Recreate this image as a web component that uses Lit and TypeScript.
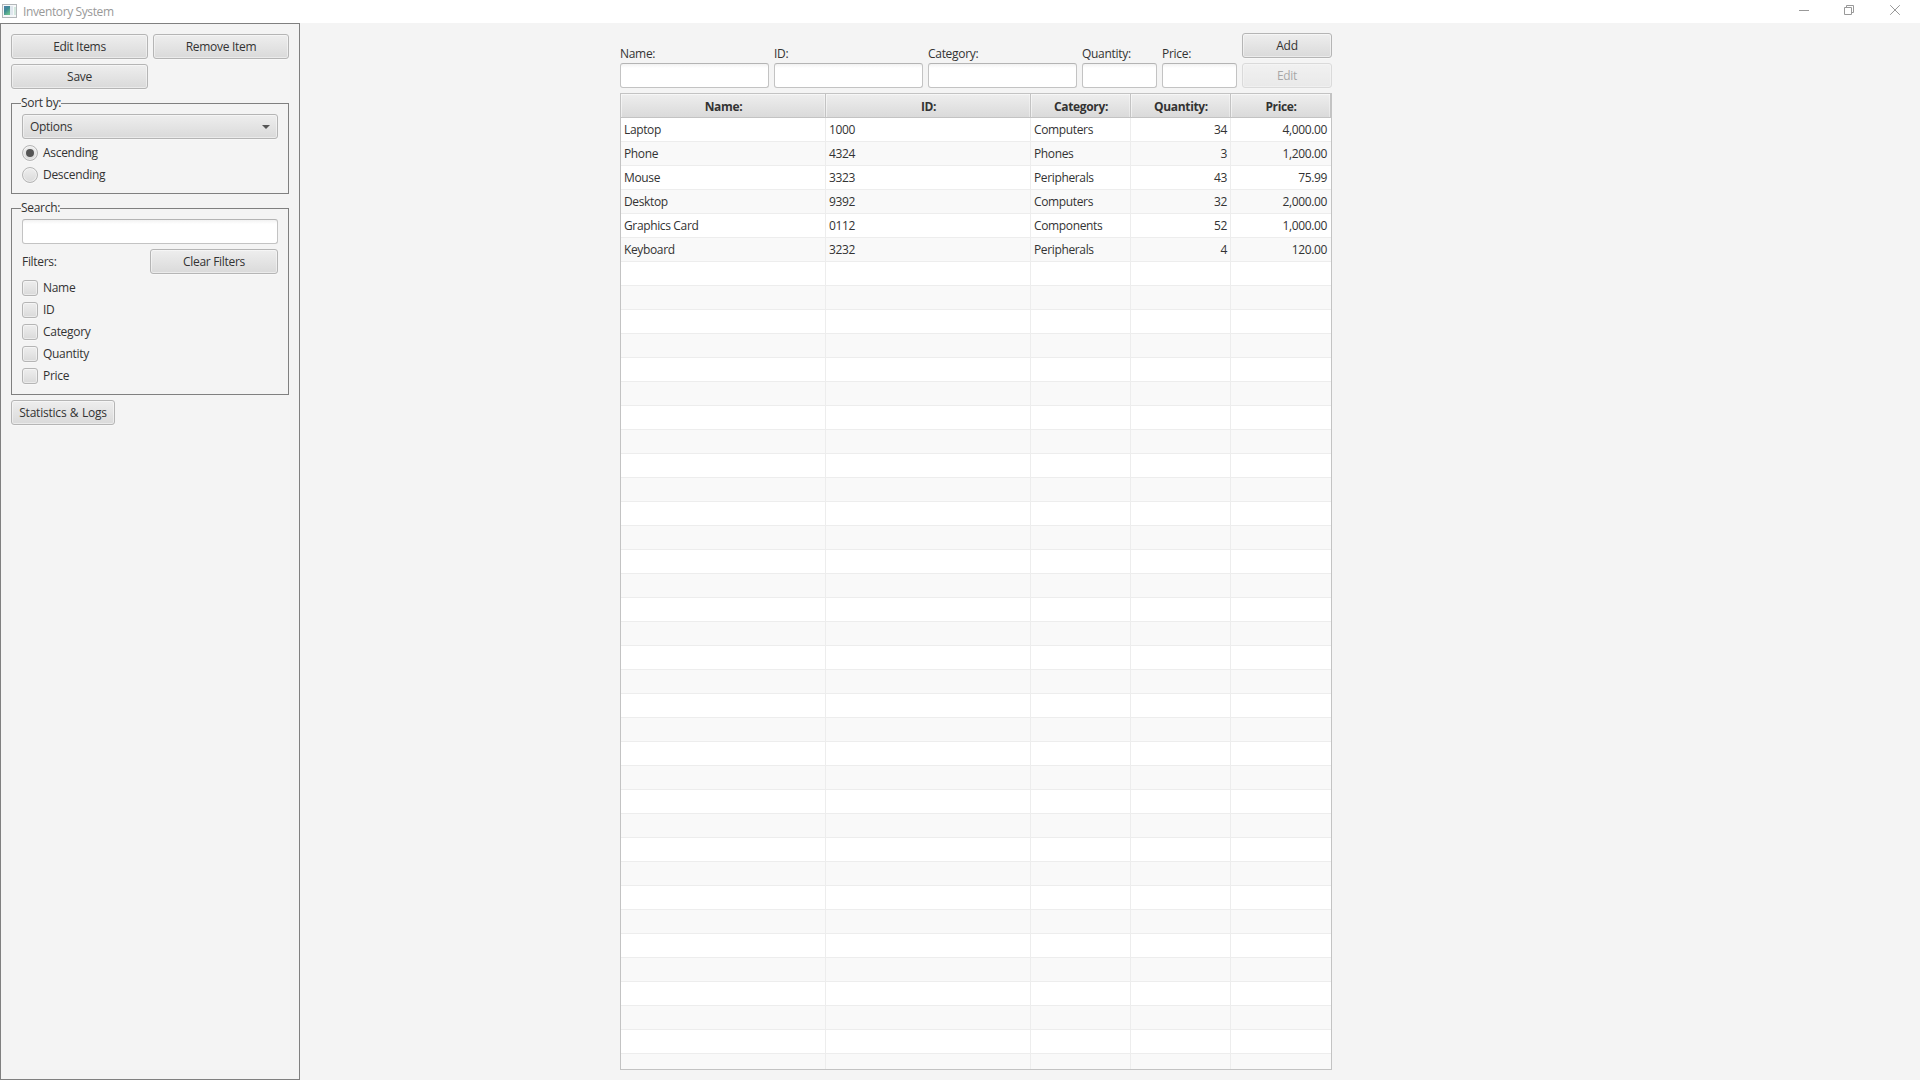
import { LitElement, html, css } from "lit";
import { customElement, property } from "lit/decorators.js";

interface Item {
  name: string;
  id: string;
  category: string;
  quantity: string;
  price: string;
}

const ITEMS: Item[] = [
  { name: "Laptop", id: "1000", category: "Computers", quantity: "34", price: "4,000.00" },
  { name: "Phone", id: "4324", category: "Phones", quantity: "3", price: "1,200.00" },
  { name: "Mouse", id: "3323", category: "Peripherals", quantity: "43", price: "75.99" },
  { name: "Desktop", id: "9392", category: "Computers", quantity: "32", price: "2,000.00" },
  { name: "Graphics Card", id: "0112", category: "Components", quantity: "52", price: "1,000.00" },
  { name: "Keyboard", id: "3232", category: "Peripherals", quantity: "4", price: "120.00" },
];

const ROW_COUNT = 40;
const FILTERS = ["Name", "ID", "Category", "Quantity", "Price"];
const COLUMNS = ["Name:", "ID:", "Category:", "Quantity:", "Price:"];

// Bevelled look shared by buttons, the combo box and check marks.
const bevel = css`
  .bevel {
    box-sizing: border-box;
    border: 1px solid #b5b5b5;
    border-radius: 3px;
    background: linear-gradient(#eeeeee, #dadada);
    box-shadow: inset 0 0 0 1px rgba(255, 255, 255, 0.45), 0 1px 0 #f8f8f8;
  }
  .field {
    box-sizing: border-box;
    height: 25px;
    border: 1px solid #c3c3c3;
    border-top-color: #b4b4b4;
    border-radius: 3px;
    background: linear-gradient(#f2f2f2, #ffffff 4px);
  }
`;

@customElement("title-bar")
export class TitleBar extends LitElement {
  static styles = css`
    :host {
      display: flex;
      align-items: flex-start;
      height: 23px;
      background: #fff;
    }
    .icon {
      margin: 4px 0 0 2px;
      display: block;
    }
    .title {
      flex: 1;
      margin-left: 6px;
      line-height: 23px;
      color: #999;
      letter-spacing: -0.38px;
    }
    .controls {
      display: block;
    }
  `;
  render() {
    return html`
      <svg class="icon" width="15" height="14" viewBox="0 0 15 14">
        <defs>
          <linearGradient id="g" x1="0" y1="0" x2="0.6" y2="1">
            <stop offset="0" stop-color="#4f7fae" />
            <stop offset="0.5" stop-color="#3f8b93" />
            <stop offset="1" stop-color="#6cc08f" />
          </linearGradient>
        </defs>
        <rect x="0.5" y="0.5" width="14" height="13" fill="#f6f8f9" stroke="#b3b7ba" />
        <rect x="2" y="2" width="6" height="9" fill="url(#g)" />
        <rect x="8" y="2" width="3" height="9" fill="#dfe7ee" />
        <rect x="12" y="3" width="2" height="8" fill="#d3e8df" />
      </svg>
      <span class="title">Inventory System</span>
      <svg class="controls" width="138" height="23" viewBox="0 0 138 23" fill="none" stroke="#999">
        <path d="M17 10.5H27" />
        <path d="M62.5 7.5H69.5V14.5H62.5ZM64.5 7V5.5H71.5V12.5H70" />
        <path d="M108.2 5.2L117.8 14.8M117.8 5.2L108.2 14.8" />
      </svg>
    `;
  }
}

@customElement("fx-button")
export class FxButton extends LitElement {
  @property() label = "";
  @property({ type: Boolean, reflect: true }) disabled = false;
  static styles = [
    bevel,
    css`
      :host {
        display: block;
        height: 25px;
      }
      :host([disabled]) {
        opacity: 0.4;
      }
      .bevel {
        height: 25px;
        padding: 0 7px;
        line-height: 23px;
        text-align: center;
        white-space: nowrap;
      }
    `,
  ];
  render() {
    return html`<div class="bevel">${this.label}</div>`;
  }
}

@customElement("side-panel")
export class SidePanel extends LitElement {
  static styles = [
    bevel,
    css`
      :host {
        box-sizing: border-box;
        width: 300px;
        border: 1px solid #808080;
        padding: 10px;
        display: flex;
        flex-direction: column;
      }
      .actions {
        display: grid;
        grid-template-columns: 137px 136px;
        gap: 5px;
      }
      .group {
        margin: 6px 0 0;
        padding: 2px 10px 10px;
        min-width: 0;
        border: 1px solid #808080;
      }
      .legend {
        margin-left: -1px;
        padding: 0;
        height: 17px;
        line-height: 16px;
      }
      .combo {
        display: flex;
        align-items: center;
        justify-content: space-between;
        height: 25px;
        padding: 0 7px;
        line-height: 23px;
      }
      .arrow {
        display: block;
      }
      .check {
        display: flex;
        align-items: center;
        gap: 5px;
        height: 16px;
        margin-top: 6px;
        line-height: 16px;
      }
      .mark {
        width: 16px;
        height: 16px;
      }
      .round {
        border-radius: 50%;
        display: grid;
        place-items: center;
      }
      .dot {
        width: 8px;
        height: 8px;
        border-radius: 50%;
        background: #555;
      }
      .filters {
        display: grid;
        grid-template-columns: 128px 128px;
        align-items: center;
        margin-top: 5px;
      }
      .stats {
        width: 104px;
        margin-top: 5px;
        letter-spacing: -0.22px;
        word-spacing: 0.6px;
      }
    `,
  ];
  render() {
    return html`
      <div class="actions">
        <fx-button label="Edit Items"></fx-button>
        <fx-button label="Remove Item"></fx-button>
        <fx-button label="Save"></fx-button>
      </div>
      <fieldset class="group">
        <legend class="legend">Sort by:</legend>
        <div class="combo bevel">
          <span>Options</span>
          <svg class="arrow" width="8" height="4" viewBox="0 0 8 4"><path d="M0 0H8L4 4Z" fill="#555" /></svg>
        </div>
        <div class="check"><span class="mark round bevel"><span class="dot"></span></span>Ascending</div>
        <div class="check"><span class="mark round bevel"></span>Descending</div>
      </fieldset>
      <fieldset class="group">
        <legend class="legend">Search:</legend>
        <div class="field"></div>
        <div class="filters">
          <span>Filters:</span>
          <fx-button label="Clear Filters"></fx-button>
        </div>
        ${FILTERS.map((f) => html`<div class="check"><span class="mark bevel"></span>${f}</div>`)}
      </fieldset>
      <fx-button class="stats" label="Statistics &amp; Logs"></fx-button>
    `;
  }
}

@customElement("item-form")
export class ItemForm extends LitElement {
  static styles = [
    bevel,
    css`
      :host {
        display: grid;
        grid-template-columns: 149px 149px 149px 75px 75px 90px;
        column-gap: 5px;
        align-items: end;
      }
      .label {
        display: block;
        height: 17px;
        line-height: 16px;
      }
      .buttons {
        display: flex;
        flex-direction: column;
        gap: 5px;
      }
    `,
  ];
  render() {
    return html`
      ${COLUMNS.map((l) => html`<div><span class="label">${l}</span><div class="field"></div></div>`)}
      <div class="buttons">
        <fx-button label="Add"></fx-button>
        <fx-button label="Edit" disabled></fx-button>
      </div>
    `;
  }
}

@customElement("item-table")
export class ItemTable extends LitElement {
  static styles = css`
    :host {
      display: block;
      box-sizing: border-box;
      border: 1px solid #c3c3c3;
      overflow: hidden;
      background: #fff;
      letter-spacing: -0.36px;
    }
    .head,
    .row {
      display: grid;
      grid-template-columns: 205px 205px 100px 100px 100px;
      height: 24px;
    }
    .th {
      box-sizing: border-box;
      border-right: 1px solid #c3c3c3;
      border-bottom: 1px solid #c3c3c3;
      background: linear-gradient(#eeeeee, #dadada);
      box-shadow: inset 1px 1px 0 rgba(255, 255, 255, 0.5), inset -1px 0 0 rgba(255, 255, 255, 0.35);
      height: 24px;
      padding-left: 1px;
      text-align: center;
      font-weight: 700;
      line-height: 26px;
      letter-spacing: -0.35px;
    }
    .td {
      box-sizing: border-box;
      border-right: 1px solid #ededed;
      border-bottom: 1px solid #ededed;
      padding: 0 3px;
      line-height: 23px;
      white-space: nowrap;
    }
    .td:last-child {
      border-right: 0;
      padding-right: 4px;
    }
    .row:nth-child(odd) {
      background: #f9f9f9;
    }
    .num {
      text-align: right;
    }
  `;
  render() {
    const rows = Array.from({ length: ROW_COUNT }, (_, i) => ITEMS[i]);
    return html`
      <div class="head">${COLUMNS.map((c) => html`<div class="th">${c}</div>`)}</div>
      ${rows.map(
        (r) => html`<div class="row">
          <div class="td">${r?.name}</div>
          <div class="td">${r?.id}</div>
          <div class="td">${r?.category}</div>
          <div class="td num">${r?.quantity}</div>
          <div class="td num">${r?.price}</div>
        </div>`
      )}
    `;
  }
}

@customElement("app-root")
export class AppRoot extends LitElement {
  static styles = css`
    :host {
      display: flex;
      flex-direction: column;
      width: 1920px;
      height: 1080px;
      overflow: hidden;
      background: #f4f4f4;
      color: #333;
      font-family: "Open Sans", "Noto Sans", sans-serif;
      font-size: 12px;
      letter-spacing: -0.3px;
    }
    .body {
      flex: 1;
      min-height: 0;
      display: flex;
    }
    .main {
      flex: 1;
      display: flex;
      flex-direction: column;
      padding: 10px 588px 10px 320px;
      gap: 5px;
    }
    .table {
      flex: 1;
      min-height: 0;
    }
  `;
  render() {
    return html`
      <title-bar></title-bar>
      <div class="body">
        <side-panel></side-panel>
        <div class="main">
          <item-form></item-form>
          <item-table class="table"></item-table>
        </div>
      </div>
    `;
  }
}
